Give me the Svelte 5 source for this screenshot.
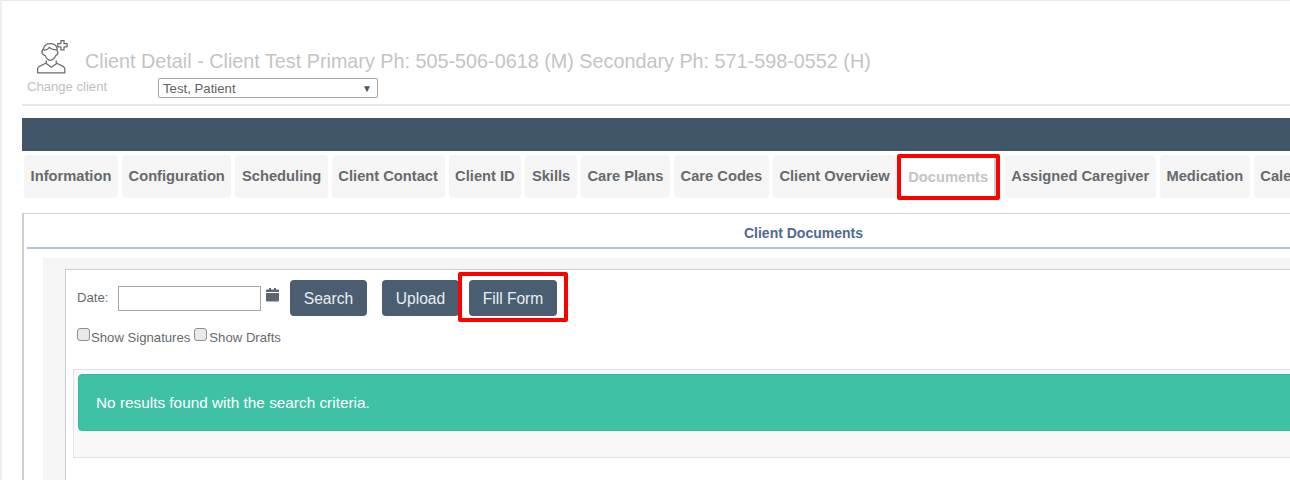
<script>
  const tabs = ['Information','Configuration','Scheduling','Client Contact','Client ID','Skills','Care Plans','Care Codes','Client Overview','Documents','Assigned Caregiver','Medication','Calendar'];
</script>

<div class="page">
  <header class="head">
    <div class="title-row">
      <svg class="user" width="33" height="34" viewBox="2 1.500 30 32.500" fill="none" stroke="#6b6b6b" stroke-width="1.200" stroke-linejoin="round" stroke-linecap="round">
        <path d="M9 16c-1.500-1-2.500-2-2-4 .5-2 1-2 1.500-2 .3-3 3-5 6.500-5 3 0 5 1 6 3.500.5 1.300.5 2.500.5 3.500.8.500 1 1.500.5 2.500-.5 1-1.500 1.500-2 2-.5 2-3 4.500-5 4.500s-4-2.500-5-4.500c-.7-.2-1.200-.5-1.500-1z"/>
        <path d="M8.500 11c2 .5 4-.5 5.500-2.500 1.500 1.500 4 2.500 7 2.500"/>
        <path d="M11 21.500v2l-7 3.500c-.8.500-1.200 1-1.200 2v4h26v-4c0-1-.4-1.500-1.200-2l-7-3.500v-2"/>
        <path d="M11 24l5 3.500 5-3.500"/>
        <path d="M25 2h3v3h3v3h-3v3h-3V8h-3V5h3z"/>
      </svg>
      <h1>Client Detail - Client Test Primary Ph: 505-506-0618 (M) Secondary Ph: 571-598-0552 (H)</h1>
    </div>
    <div class="client-row">
      <span class="change">Change client</span>
      <div class="select"><span>Test, Patient</span><span class="arrow">▼</span></div>
    </div>
  </header>

  <section class="main">
    <div class="bar"></div>
    <nav class="tabs">
      {#each tabs as t}
        <div class="tab" class:active={t === 'Documents'}>{t}</div>
      {/each}
    </nav>
    <div class="panel">
      <h2>Client Documents</h2>
      <div class="well">
        <div class="box">
          <div class="form-row">
            <label class="date-label" for="date">Date:</label>
            <input id="date" class="date" type="text" />
            <svg class="cal" width="14" height="14" viewBox="0 0 14 14" fill="#5b6670">
              <path d="M0 5h13v7.500a1 1 0 0 1-1 1H1a1 1 0 0 1-1-1zM1 1.500h2V0h2v1.500h3V0h2v1.500h2a1 1 0 0 1 1 1V4H0V2.500a1 1 0 0 1 1-1z"/>
            </svg>
            <button class="btn search">Search</button>
            <button class="btn upload">Upload</button>
            <span class="fill-wrap"><button class="btn fill">Fill Form</button></span>
          </div>
          <div class="checks">
            <span class="check"></span><span class="check-label">Show Signatures</span>
            <span class="check second"></span><span class="check-label last">Show Drafts</span>
          </div>
          <div class="results">
            <div class="alert">No results found with the search criteria.</div>
          </div>
        </div>
      </div>
    </div>
  </section>
</div>

<style>
  :global(body) { margin: 0; background: #fff; overflow: hidden; }
  .page {
    width: 1290px; height: 480px; box-sizing: border-box; overflow: hidden;
    border-top: 1px solid #e7eaec; border-left: 2px solid #eceef0;
    font-family: "Liberation Sans", Arial, sans-serif; color: #676a6c; padding-left: 20px;
    background: #fff;
  }
  .head { height: 103px; border-bottom: 2px solid #e7eaec; margin-bottom: 12px; }
  .title-row { display: flex; align-items: flex-start; padding-top: 39px; height: 38px; padding-left: 14px; }
  .user { flex: none; }
  h1 { margin: 9px 0 0 16px; font-size: 19.800px; line-height: 24px; font-weight: 400; color: #c4c4c4; white-space: nowrap; }
  .client-row { display: flex; align-items: flex-start; padding-left: 5px; }
  .change { width: 131px; font-size: 13.100px; line-height: 16px; color: #c0c0c0; padding-top: 1px; }
  .select {
    width: 220px; height: 20px; box-sizing: border-box; border: 1px solid #a6a6a6; border-radius: 2px;
    display: flex; justify-content: space-between; align-items: center; padding: 0 5px 0 4px;
    font-size: 13.200px; color: #5f5f5f;
  }
  .arrow { font-size: 10px; color: #555; }
  .bar { height: 33px; background: #425669; }
  .tabs { display: flex; gap: 4px; padding: 4px 0 0 2px; height: 50px; width: 1400px; }
  .tab {
    box-sizing: border-box; height: 43px; padding: 0 6.600px; display: flex; align-items: center;
    background: #f5f5f5; border-radius: 4px; font-size: 14.700px; font-weight: 700; color: #676a6c;
    white-space: nowrap; flex: none; padding-bottom: 1px;
  }
  .tab.active {
    color: #c4c4c4; background: #fff; margin: -1px 1px 0 -3px; height: 46px; padding: 0 7.500px 0 7px;
    border: 4px solid #f00; border-radius: 2px; box-shadow: inset -2px 0 #ccc;
  }
  .panel { border-top: 1px solid #cfcfcf; border-left: 2px solid #cfcfcf; margin-top: 8px; padding: 0 0 0 3px; height: 300px; }
  h2 {
    margin: 0; height: 35px; box-sizing: border-box; border-bottom: 2px solid #b0c1da; padding-top: 11px;
    font-size: 14px; line-height: 16px; font-weight: 700; color: #4f6a92; text-align: center;
    width: 1553px;
  }
  .well { background: #f5f5f5; margin: 9px 0 0 16px; padding: 11px 0 0 22px; height: 250px; }
  .box { background: #fff; border-top: 1px solid #cfcfcf; border-left: 1px solid #cfcfcf; height: 250px; padding-left: 7px; }
  .form-row { display: flex; align-items: flex-start; padding: 10px 0 0 4px; height: 36px; }
  .date-label { font-size: 13.200px; line-height: 14px; margin-top: 11px; width: 41px; color: #676a6c; }
  .date { width: 143px; height: 25px; box-sizing: border-box; border: 1px solid #a6a6a6; margin: 6px 0 0 0; padding: 0; background: #fff; }
  .cal { margin: 8px 0 0 5px; flex: none; }
  .btn {
    height: 36px; border: none; border-radius: 4px; background: #4b5e71; color: #e8eef2;
    font: 400 15.600px "Liberation Sans", Arial, sans-serif; padding: 1px 0 0; flex: none; display: block;
  }
  .search { width: 77px; margin-left: 10px; }
  .upload { width: 77px; margin-left: 15px; }
  .fill-wrap { position: relative; margin-left: 10px; flex: none; }
  .fill-wrap::after { content: ""; position: absolute; inset: -8px -11px -6px; border: 4px solid #f00; border-radius: 2px; }
  .fill { width: 88px; }
  .checks { display: flex; align-items: flex-start; padding: 12px 0 0 4px; height: 30px; font-size: 13.150px; color: #676a6c; }
  .check { width: 13px; height: 13px; box-sizing: border-box; border: 1px solid #8f8f8f; border-radius: 3px; background: #e9e9e9; }
  .check.second { margin-left: 4px; }
  .check-label { margin: 2px 0 0 1px; line-height: 15px; }
  .check-label.last { margin-left: 2px; }
  .results { margin: 11px 0 0 0; width: 1300px; height: 89px; border: 1px solid #e2e2e2; background: #f8f8f8; box-sizing: border-box; padding: 4px 0 0 4px; }
  .alert {
    height: 57px; box-sizing: border-box; background: #3fc1a5; border: 1px solid #33b898; border-radius: 4px;
    color: #fff; font-size: 15.350px; line-height: 55px; padding-left: 17px;
  }
</style>
